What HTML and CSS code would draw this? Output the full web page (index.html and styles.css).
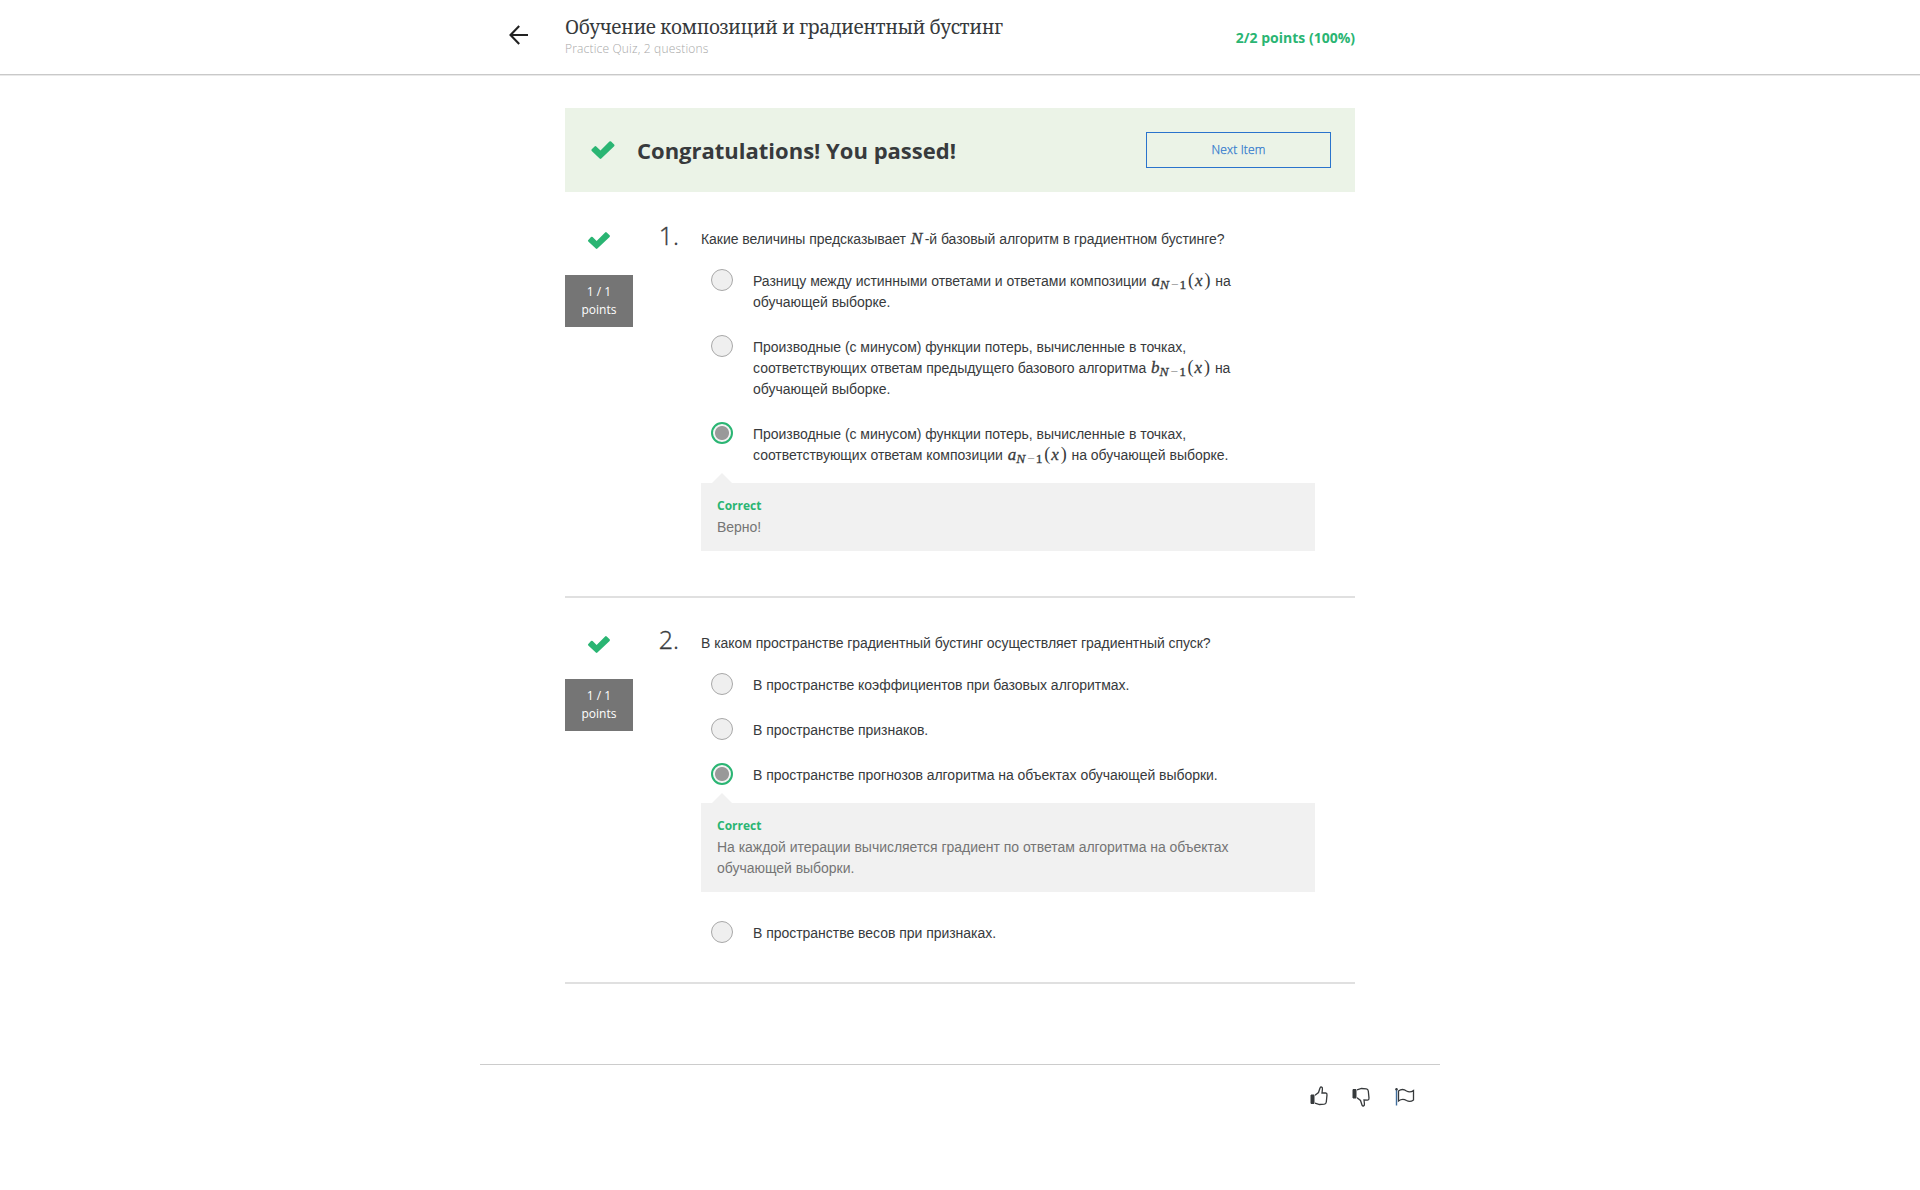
FILE: index.html
```html
<!DOCTYPE html>
<html lang="ru">
<head>
<meta charset="utf-8">
<title>Обучение композиций и градиентный бустинг</title>
<link rel="stylesheet" href="styles.css">
</head>
<body>
<svg class="defs" width="0" height="0" aria-hidden="true">
  <symbol id="check" viewBox="0 0 24 19"><path d="M1.300 8.900 4 6.100q.8-.8 1.600 0L9.600 10 18.100 1.500q.8-.8 1.600 0L22.600 4.300q.8.8 0 1.600L10.400 17.600q-.8.8-1.600 0L1.300 10.500q-.8-.8 0-1.600z" fill="#2ab573"/></symbol>
</svg>
<header class="header">
  <div class="header-inner">
    <a class="back" aria-label="Back"><svg width="20" height="20" viewBox="0 0 20 20"><path d="M10.200 1 1.500 10l8.700 9M1.500 10H19" fill="none" stroke="#222" stroke-width="2.100"/></svg></a>
    <div class="heading">
      <h1 class="title">Обучение композиций и градиентный бустинг</h1>
      <p class="subtitle">Practice Quiz, 2 questions</p>
    </div>
    <span class="score">2/2 points (100%)</span>
  </div>
</header>
<main class="main">
  <section class="banner">
    <svg class="banner-check" width="26" height="20"><use href="#check"/></svg>
    <h2 class="banner-title">Congratulations! You passed!</h2>
    <button class="next">Next Item</button>
  </section>

  <article class="question">
    <div class="grade"><svg class="grade-check" width="24" height="19"><use href="#check"/></svg><div class="badge">1 / 1<br>points</div></div>
    <div class="number">1.</div>
    <div class="body">
      <p class="prompt">Какие величины предсказывает <span class="math big">N</span>-й базовый алгоритм в градиентном бустинге?</p>
      <div class="option"><span class="radio"></span><p>Разницу между истинными ответами и ответами композиции <span class="math"><i>a</i><span class="sub"><i>N</i><span class="minus">−</span>1</span><span class="paren">(</span><i class="x">x</i><span class="paren">)</span></span> на<br>обучающей выборке.</p></div>
      <div class="option"><span class="radio"></span><p>Производные (с минусом) функции потерь, вычисленные в точках,<br>соответствующих ответам предыдущего базового алгоритма <span class="math"><i>b</i><span class="sub"><i>N</i><span class="minus">−</span>1</span><span class="paren">(</span><i class="x">x</i><span class="paren">)</span></span> на<br>обучающей выборке.</p></div>
      <div class="option"><span class="radio checked"></span><p>Производные (с минусом) функции потерь, вычисленные в точках,<br>соответствующих ответам композиции <span class="math"><i>a</i><span class="sub"><i>N</i><span class="minus">−</span>1</span><span class="paren">(</span><i class="x">x</i><span class="paren">)</span></span> на обучающей выборке.</p></div>
      <div class="feedback"><strong>Correct</strong><p>Верно!</p></div>
    </div>
  </article>

  <article class="question second">
    <div class="grade"><svg class="grade-check" width="24" height="19"><use href="#check"/></svg><div class="badge">1 / 1<br>points</div></div>
    <div class="number">2.</div>
    <div class="body">
      <p class="prompt">В каком пространстве градиентный бустинг осуществляет градиентный спуск?</p>
      <div class="option"><span class="radio"></span><p>В пространстве коэффициентов при базовых алгоритмах.</p></div>
      <div class="option"><span class="radio"></span><p>В пространстве признаков.</p></div>
      <div class="option"><span class="radio checked"></span><p>В пространстве прогнозов алгоритма на объектах обучающей выборки.</p></div>
      <div class="feedback"><strong>Correct</strong><p>На каждой итерации вычисляется градиент по ответам алгоритма на объектах<br>обучающей выборки.</p></div>
      <div class="option"><span class="radio"></span><p>В пространстве весов при признаках.</p></div>
    </div>
  </article>
</main>
<footer class="footer">
  <svg width="18" height="20" viewBox="0 0 18 20"><path d="M1 9h3v8.500H1z" fill="#373a3c" stroke="#373a3c"/><path d="M5 9.200 8.500 6.500 10 2q.4-1.400 1.700-.8 1 .5.700 2.300L12 7l3.500-.1q1.700.2 1.500 2l-.7 7.100q-.3 2-2 2.200l-4.800.3L5 17.200" fill="none" stroke="#373a3c" stroke-width="1.300"/></svg>
  <svg class="down" width="18" height="20" viewBox="0 0 18 20"><path d="M1 2.500h3V11H1z" fill="#373a3c" stroke="#373a3c"/><path d="M5 10.800 8.500 13.500 10 18q.4 1.400 1.700.8 1-.5.700-2.300L12 13l3.500.1q1.700-.2 1.500-2L16.300 4q-.3-2-2-2.200L9.500 1.500 5 2.800" fill="none" stroke="#373a3c" stroke-width="1.300"/></svg>
  <svg class="flag" width="20" height="18" viewBox="0 0 20 18"><path d="M1.500.5V17.500" stroke="#3f6d9c" stroke-width="1.400"/><circle cx="1.500" cy="1.300" r="1.200" fill="#373a3c"/><path d="M3.500 3q4-3 8 0 3.500 2 7-.5v9.500q-3.500 2.500-7 .5-4-2.500-8 .5z" fill="none" stroke="#373a3c" stroke-width="1.300"/></svg>
</footer>
</body>
</html>
```
FILE: styles.css
```css
* { box-sizing: border-box; }
body { margin: 0; background: #fff; color: #373a3c; font: 14px/21px "Liberation Sans", Arial, sans-serif; }
h1, h2, p { margin: 0; }
.defs { display: block; }
.header { height: 76px; border-bottom: 1px solid #e9e9e9; box-shadow: inset 0 -1px #c9c9c9; }
.header-inner { width: 846px; height: 75px; margin-left: 509px; display: flex; align-items: flex-start; }
.back { width: 56px; padding-top: 25px; line-height: 0; }
.heading { flex: 1; padding-top: 14px; }
.title { font: 400 19px/26px "Noto Serif", "Liberation Serif", serif; letter-spacing: -.41px; white-space: nowrap; }
.subtitle { font: 300 12px/18px "Open Sans", sans-serif; letter-spacing: .18px; color: #a8a8a8; }
.score { padding-top: 28px; font: 700 14px/20px "Open Sans", sans-serif; color: #2ab573; }
.main { width: 790px; margin: 32px auto 0; }
.banner { height: 84px; background: #ebf3e7; display: flex; align-items: center; padding: 0 24px 0 25px; }
.banner-title { flex: 1; margin-left: 21px; font: 700 22px/32px "Open Sans", sans-serif; }
.next { width: 185px; height: 36px; border: 1px solid #2a73cc; background: none; color: #2a73cc; font: 300 12px/18px "Open Sans", sans-serif; letter-spacing: .15px; padding: 0; -webkit-text-stroke: .25px; }
.question { display: grid; grid-template-columns: 68px 68px 614px; height: 406px; padding-top: 37px; border-bottom: 2px solid #e0e0e0; }
.second { height: 386px; padding-top: 35px; }
.grade { text-align: center; padding-top: 2px; }
.grade-check { display: block; margin: 0 auto; }
.badge { margin-top: 25px; height: 52px; padding-top: 8px; background: #757575; color: #fff; font: 400 12px/18px "Open Sans", sans-serif; }
.number { padding: 0 22px 0 0; margin-top: -11px; text-align: right; font: 300 25px/34px "Open Sans", sans-serif; -webkit-text-stroke: .35px; }
.prompt { height: 42px; white-space: nowrap; letter-spacing: -.05px; }
.option { display: flex; margin-bottom: 24px; white-space: nowrap; letter-spacing: -.03px; }
.radio { width: 22px; height: 22px; margin: -2px 20px -2px 10px; flex: none; border: 1px solid #a8a8a8; border-radius: 50%; background: #efefef; }
.radio.checked { border: 2px solid #2ab573; background: radial-gradient(circle, #999 6.500px, #f4f4f4 7.500px); }
.feedback { position: relative; margin: -7px 0 31px; padding: 12px 16px 13px; background: #f1f1f1; color: #757575; letter-spacing: -.03px; }
.feedback::before { content: ""; position: absolute; left: 11px; top: -10px; border: 10px solid transparent; border-top: 0; border-bottom-color: #f1f1f1; }
.feedback strong { display: block; height: 22px; font: 700 12px/21px "Open Sans", sans-serif; letter-spacing: 0; color: #2ab573; }
.math { display: inline-flex; width: 60px; height: 16px; margin-left: 1px; line-height: 16px; font-family: "Liberation Serif", serif; font-size: 17px; align-items: baseline; vertical-align: baseline; letter-spacing: 0; -webkit-text-stroke: .3px; }
.math.big { width: 14px; font-size: 17.500px; font-style: italic; }
.math .sub { font-size: 13.500px; position: relative; top: 3px; width: 28px; }
.x { margin: 0 2px 0 1px; }
.minus { margin: 0 1px 0 2px; -webkit-text-stroke: 0; opacity: .6; }
.paren { font-size: 18px; -webkit-text-stroke: 0; }
.footer { width: 960px; margin: 80px auto 0; border-top: 1px solid #ccc; padding: 21px 25px 0 0; display: flex; justify-content: flex-end; gap: 24px; }
.down { margin-top: 1px; }
.flag { margin: 2px 0 0 1px; }
```
